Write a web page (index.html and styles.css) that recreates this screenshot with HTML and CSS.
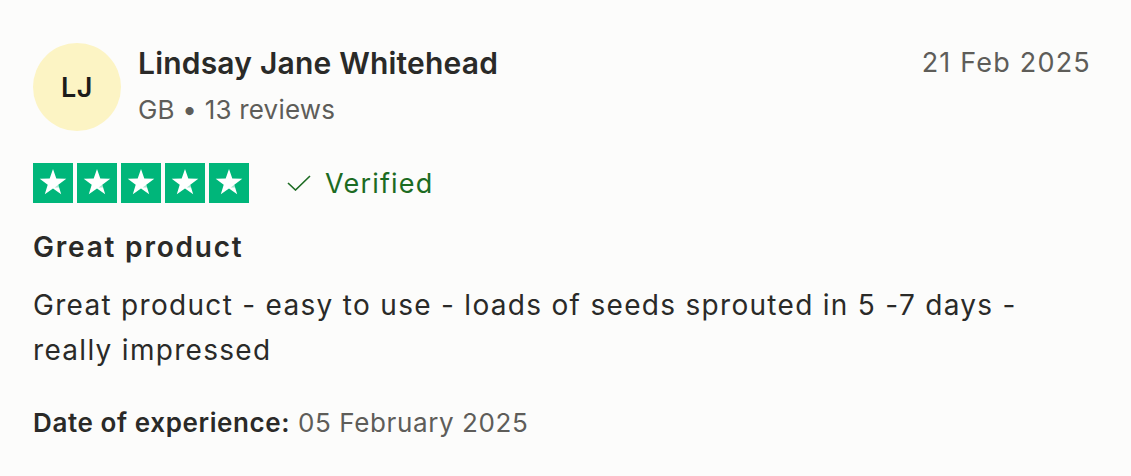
FILE: index.html
```html
<!DOCTYPE html>
<html lang="en">
<head>
    <meta charset="UTF-8">
    <meta name="viewport" content="width=device-width, initial-scale=1.0">
    <title>Review</title>
    <link rel="stylesheet" href="styles.css">
</head>
<body>
    <article class="review">
        <header class="review-head">
            <div class="avatar">LJ</div>
            <div class="reviewer">
                <div class="reviewer-name">Lindsay Jane Whitehead</div>
                <div class="reviewer-meta">GB &bull; 13 reviews</div>
            </div>
            <time class="review-date">21 Feb 2025</time>
        </header>

        <div class="rating-row">
            <div class="stars">
                <svg class="star" viewBox="0 0 40 40"><rect width="40" height="40" fill="#00b67a"/><polygon points="20,6 23.3,15.5 33.3,15.7 25.3,21.7 28.2,31.3 20,25.6 11.8,31.3 14.7,21.7 6.7,15.7 16.7,15.5" fill="#fff"/><polygon points="25.3,21.7 26.1,24.4 21.7,24.4" fill="#00b67a" opacity="0.35"/></svg>
                <svg class="star" viewBox="0 0 40 40"><rect width="40" height="40" fill="#00b67a"/><polygon points="20,6 23.3,15.5 33.3,15.7 25.3,21.7 28.2,31.3 20,25.6 11.8,31.3 14.7,21.7 6.7,15.7 16.7,15.5" fill="#fff"/><polygon points="25.3,21.7 26.1,24.4 21.7,24.4" fill="#00b67a" opacity="0.35"/></svg>
                <svg class="star" viewBox="0 0 40 40"><rect width="40" height="40" fill="#00b67a"/><polygon points="20,6 23.3,15.5 33.3,15.7 25.3,21.7 28.2,31.3 20,25.6 11.8,31.3 14.7,21.7 6.7,15.7 16.7,15.5" fill="#fff"/><polygon points="25.3,21.7 26.1,24.4 21.7,24.4" fill="#00b67a" opacity="0.35"/></svg>
                <svg class="star" viewBox="0 0 40 40"><rect width="40" height="40" fill="#00b67a"/><polygon points="20,6 23.3,15.5 33.3,15.7 25.3,21.7 28.2,31.3 20,25.6 11.8,31.3 14.7,21.7 6.7,15.7 16.7,15.5" fill="#fff"/><polygon points="25.3,21.7 26.1,24.4 21.7,24.4" fill="#00b67a" opacity="0.35"/></svg>
                <svg class="star" viewBox="0 0 40 40"><rect width="40" height="40" fill="#00b67a"/><polygon points="20,6 23.3,15.5 33.3,15.7 25.3,21.7 28.2,31.3 20,25.6 11.8,31.3 14.7,21.7 6.7,15.7 16.7,15.5" fill="#fff"/><polygon points="25.3,21.7 26.1,24.4 21.7,24.4" fill="#00b67a" opacity="0.35"/></svg>
            </div>
            <div class="verified">
                <svg class="check" viewBox="0 0 24 16"><polyline points="1,8 8.5,15 23,1" fill="none" stroke="#1c6b22" stroke-width="1.6"/></svg>
                <span>Verified</span>
            </div>
        </div>

        <h2 class="review-title">Great product</h2>
        <p class="review-text">Great product - easy to use - loads of seeds sprouted in 5 -7 days - really impressed</p>

        <p class="experience"><b>Date of experience:</b> 05 February 2025</p>
    </article>
</body>
</html>
```

FILE: styles.css
```css
body {
    margin: 0;
    padding: 0;
    background-color: #fcfcfb;
    color: #2a2a28;
    font-family: Inter, "Noto Sans", sans-serif;
}

.review {
    padding: 43px 40px 0 33px;
}

.review-head {
    display: flex;
    align-items: flex-start;
}

.avatar {
    width: 88px;
    height: 88px;
    border-radius: 50%;
    background-color: #fcf4c4;
    display: flex;
    align-items: center;
    justify-content: center;
    font-size: 27px;
    font-weight: 600;
    letter-spacing: 0.5px;
    color: #1c1c1a;
    flex-shrink: 0;
}

.reviewer {
    flex-grow: 1;
    margin-left: 17px;
}

.reviewer-name {
    font-size: 30px;
    font-weight: 600;
    line-height: 40px;
    letter-spacing: 0.2px;
    color: #2a2a28;
}

.reviewer-meta {
    font-size: 26px;
    line-height: 34px;
    margin-top: 10px;
    letter-spacing: 0.2px;
    color: #5e5d59;
}

.review-date {
    font-size: 27px;
    line-height: 40px;
    letter-spacing: 1.2px;
    color: #5e5d59;
}

.rating-row {
    display: flex;
    align-items: center;
    margin-top: 32px;
}

.stars {
    display: flex;
    gap: 4px;
}

.star {
    width: 40px;
    height: 40px;
    display: block;
}

.verified {
    display: flex;
    align-items: center;
    margin-left: 38px;
    font-size: 27px;
    letter-spacing: 1.2px;
    color: #1c6b22;
}

.check {
    width: 24px;
    height: 16px;
    margin-right: 14px;
}

.review-title {
    font-size: 28px;
    font-weight: 600;
    line-height: 40px;
    letter-spacing: 1.8px;
    margin: 24px 0 0;
    color: #2a2a28;
}

.review-text {
    font-size: 28px;
    line-height: 45px;
    letter-spacing: 1.3px;
    margin: 16px 0 0;
    color: #2a2a28;
}

.experience {
    font-size: 26px;
    line-height: 34px;
    letter-spacing: 0.6px;
    margin: 33px 0 0;
    color: #5e5d59;
}

.experience b {
    font-weight: 600;
    color: #2a2a28;
}
```
